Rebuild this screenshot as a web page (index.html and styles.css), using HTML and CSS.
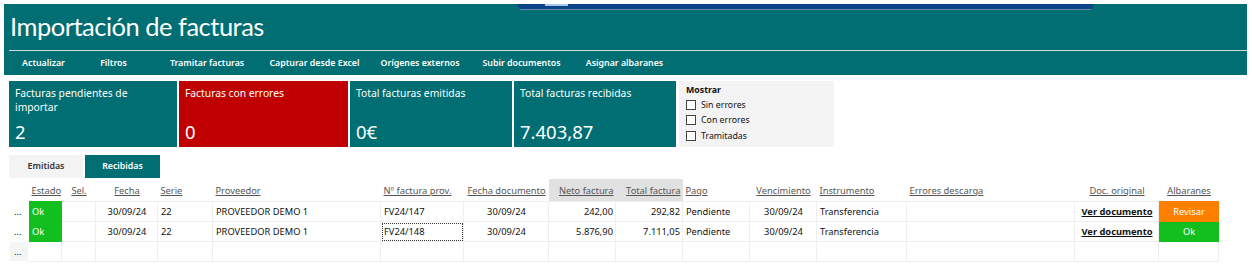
FILE: index.html
```html
<!DOCTYPE html>
<html lang="es">
<head>
    <meta charset="UTF-8">
    <title>Importación de facturas</title>
    <link rel="stylesheet" href="styles.css">
</head>
<body>
    <!-- Cabecera -->
    <header class="top">
        <div class="window-bar"><span class="window-knob"></span></div>
        <h1>Importación de facturas</h1>
        <nav class="menu">
            <a class="m-1">Actualizar</a>
            <a class="m-2">Filtros</a>
            <a class="m-3">Tramitar facturas</a>
            <a class="m-4">Capturar desde Excel</a>
            <a class="m-5">Orígenes externos</a>
            <a class="m-6">Subir documentos</a>
            <a class="m-7">Asignar albaranes</a>
        </nav>
    </header>

    <!-- Resumen -->
    <section class="cards">
        <div class="card c-1">
            <div class="card-label">Facturas pendientes de importar</div>
            <div class="card-value">2</div>
        </div>
        <div class="card c-2 error">
            <div class="card-label">Facturas con errores</div>
            <div class="card-value">0</div>
        </div>
        <div class="card c-3">
            <div class="card-label">Total facturas emitidas</div>
            <div class="card-value">0€</div>
        </div>
        <div class="card c-4">
            <div class="card-label">Total facturas recibidas</div>
            <div class="card-value">7.403,87</div>
        </div>
        <div class="show-box">
            <div class="show-title">Mostrar</div>
            <label><span class="check"></span>Sin errores</label>
            <label><span class="check"></span>Con errores</label>
            <label><span class="check"></span>Tramitadas</label>
        </div>
    </section>

    <!-- Pestañas -->
    <div class="tabs">
        <div class="tab">Emitidas</div>
        <div class="tab active">Recibidas</div>
    </div>

    <!-- Tabla -->
    <table class="grid">
        <colgroup>
            <col style="width:19px"><col style="width:33px"><col style="width:34px"><col style="width:62px">
            <col style="width:55px"><col style="width:168px"><col style="width:83px"><col style="width:85px">
            <col style="width:67px"><col style="width:67px"><col style="width:67px"><col style="width:67px">
            <col style="width:90px"><col style="width:168px"><col style="width:84px"><col style="width:60px">
        </colgroup>
        <thead>
            <tr>
                <th></th>
                <th><u>Estado</u></th>
                <th class="center"><u>Sel.</u></th>
                <th class="center"><u>Fecha</u></th>
                <th><u>Serie</u></th>
                <th><u>Proveedor</u></th>
                <th><u>Nº factura prov.</u></th>
                <th class="center"><u>Fecha documento</u></th>
                <th class="right sorted"><u>Neto factura</u></th>
                <th class="right sorted"><u>Total factura</u></th>
                <th><u>Pago</u></th>
                <th class="center"><u>Vencimiento</u></th>
                <th><u>Instrumento</u></th>
                <th><u>Errores descarga</u></th>
                <th class="center"><u>Doc. original</u></th>
                <th class="center"><u>Albaranes</u></th>
            </tr>
        </thead>
        <tbody>
            <tr>
                <td class="dots">...</td>
                <td class="state ok">Ok</td>
                <td></td>
                <td class="center">30/09/24</td>
                <td>22</td>
                <td>PROVEEDOR DEMO 1</td>
                <td>FV24/147</td>
                <td class="center">30/09/24</td>
                <td class="right">242,00</td>
                <td class="right">292,82</td>
                <td>Pendiente</td>
                <td class="center">30/09/24</td>
                <td>Transferencia</td>
                <td></td>
                <td class="center"><a class="doc-link">Ver documento</a></td>
                <td class="btn warn">Revisar</td>
            </tr>
            <tr>
                <td class="dots">...</td>
                <td class="state ok">Ok</td>
                <td></td>
                <td class="center">30/09/24</td>
                <td>22</td>
                <td>PROVEEDOR DEMO 1</td>
                <td class="focus">FV24/148</td>
                <td class="center">30/09/24</td>
                <td class="right">5.876,90</td>
                <td class="right">7.111,05</td>
                <td>Pendiente</td>
                <td class="center">30/09/24</td>
                <td>Transferencia</td>
                <td></td>
                <td class="center"><a class="doc-link">Ver documento</a></td>
                <td class="btn ok">Ok</td>
            </tr>
            <tr class="new-row">
                <td class="dots">...</td>
                <td></td><td></td><td></td><td></td><td></td><td></td><td></td>
                <td></td><td></td><td></td><td></td><td></td><td></td><td></td><td></td>
            </tr>
        </tbody>
    </table>
</body>
</html>
```

FILE: styles.css
```css
body {
    margin: 0;
    padding: 4px 5px 0 4px;
    font-family: "Noto Sans", "Open Sans", Arial, sans-serif;
    background: #fff;
    color: #222;
}

/* Cabecera */
.top {
    position: relative;
    background: #006e72;
    color: #fff;
    height: 71px;
}
.window-bar {
    position: absolute;
    top: 0;
    left: 513px;
    width: 577px;
    height: 5px;
    background: #0b4489;
    border-bottom: 1px solid #6d8aa3;
    clip-path: polygon(0 0, 100% 0, calc(100% - 3px) 100%, 3px 100%);
}
.window-knob {
    position: absolute;
    top: 0;
    left: 28px;
    width: 23px;
    height: 2px;
    background: #a9c7e6;
}
.top h1 {
    margin: 0 0 0 5px;
    height: 46px;
    padding-left: 1px;
    font-family: Lato, "Noto Sans", sans-serif;
    font-weight: 400;
    font-size: 25.5px;
    letter-spacing: -0.5px;
    line-height: 44px;
    border-bottom: 1px solid #c9dddd;
}
.menu {
    display: flex;
    height: 24px;
    align-items: center;
    padding-left: 5px;
    font-size: 8.8px;
    font-weight: 600;
}
.menu a {
    text-align: center;
    white-space: nowrap;
}
.m-1 { width: 69px; }
.m-2 { width: 71px; }
.m-3 { width: 116px; }
.m-4 { width: 99px; }
.m-5 { width: 112px; }
.m-6 { width: 91px; }
.m-7 { width: 115px; }

/* Resumen */
.cards {
    display: flex;
    gap: 2px;
    margin: 6px 0 0 5px;
    height: 66px;
}
.card {
    background: #006e72;
    color: #fff;
    padding: 5px 6px 3px;
    box-sizing: border-box;
    display: flex;
    flex-direction: column;
    justify-content: space-between;
}
.card.error { background: #c00000; }
.c-1 { width: 168px; }
.c-2 { width: 169px; }
.c-3 { width: 162px; }
.c-4 { width: 162px; }
.card-label {
    font-size: 10.3px;
    line-height: 14px;
    padding-right: 25px;
}
.card-value {
    font-size: 18.5px;
    line-height: 24px;
}
.show-box {
    margin-left: 1px;
    width: 155px;
    background: #f3f3f3;
    padding: 3px 7px;
    box-sizing: border-box;
    font-size: 8.8px;
    color: #111;
}
.show-title {
    font-weight: 700;
    line-height: 13px;
}
.show-box label {
    display: flex;
    align-items: center;
    height: 15.5px;
    gap: 5px;
}
.check {
    width: 8px;
    height: 8px;
    border: 1.5px solid #444;
    background: #fff;
}

/* Pestañas */
.tabs {
    display: flex;
    gap: 2px;
    margin: 8px 0 0 5px;
}
.tab {
    width: 74px;
    height: 23px;
    line-height: 23px;
    text-align: center;
    font-size: 8.8px;
    font-weight: 600;
    background: #f3f3f3;
    color: #333;
}
.tab.active {
    width: 75px;
    background: #006e72;
    color: #fff;
}

/* Tabla */
.grid {
    margin: 1px 0 0 5px;
    border-collapse: collapse;
    table-layout: fixed;
    width: 1208px;
    font-size: 9.3px;
}
.grid th {
    height: 22px;
    padding: 0 2px 0 3px;
    font-weight: 400;
    color: #555;
    text-align: left;
    white-space: nowrap;
    overflow: hidden;
}
.grid th.sorted { background: #e1e1e1; }
.grid td { text-align: left; }
.grid .center { text-align: center; }
.grid .right { text-align: right; }
.grid td {
    height: 19px;
    padding: 0 2px 0 3px;
    border: 1px solid #efefef;
    color: #111;
    white-space: nowrap;
    overflow: hidden;
}
.grid td.dots {
    border-color: transparent;
    padding: 0 0 0 4px;
}
.grid tr.new-row td.dots { background: #f5f5f5; }
.grid td.state.ok {
    background: #12bf1f;
    color: #fff;
    border-color: #12bf1f;
}
.grid td.btn {
    text-align: center;
    color: #fff;
}
.grid td.btn.warn { background: #ff7f00; border-color: #ff7f00; }
.grid td.btn.ok { background: #12bf1f; border-color: #12bf1f; }
.grid td.focus { outline: 1px dotted #333; outline-offset: -2px; }
.doc-link {
    color: #111;
    text-decoration: underline;
    font-weight: 700;
}
```
